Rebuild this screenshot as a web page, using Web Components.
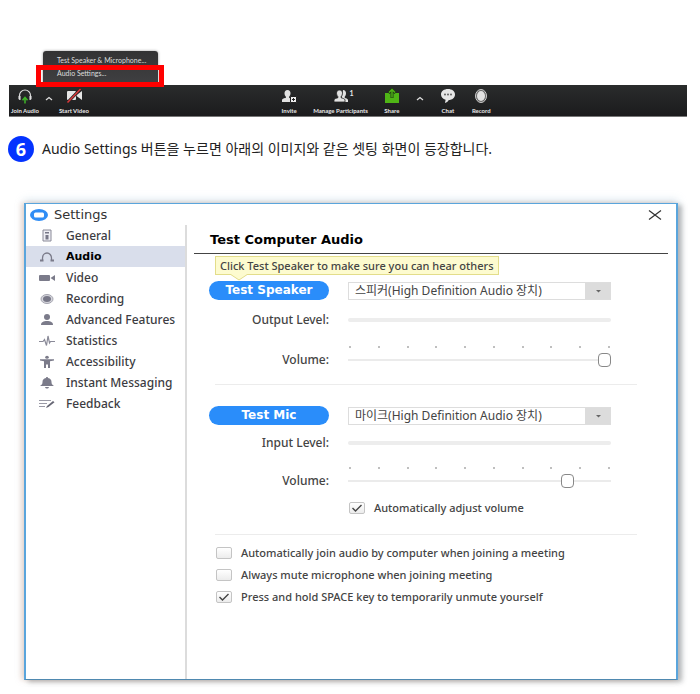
<!DOCTYPE html>
<html lang="ko">
<head>
<meta charset="utf-8">
<meta name="viewport" content="width=device-width, initial-scale=1">
<title>Audio Settings</title>
<style>
  body {
    margin: 0;
    background: #fff;
    color: #444;
    font-family: "Noto Sans", "Noto Sans CJK KR", sans-serif;
    font-size: 12px;
  }
</style>
</head>
<body>
<guide-page>
  <meeting-toolbar>
    <audio-menu slot="menu"></audio-menu>
    <tool-button icon="audio">Join Audio</tool-button>
    <tool-button icon="caret" label="Audio options"></tool-button>
    <tool-button icon="video">Start Video</tool-button>
    <tool-button slot="main" icon="invite">Invite</tool-button>
    <tool-button slot="main" icon="people" count="1">Manage Participants</tool-button>
    <tool-button slot="main" icon="share">Share</tool-button>
    <tool-button slot="main" icon="caret" label="Share options"></tool-button>
    <tool-button slot="main" icon="chat">Chat</tool-button>
    <tool-button slot="main" icon="record">Record</tool-button>
  </meeting-toolbar>
  <guide-step number="6">Audio Settings 버튼을 누르면 아래의 이미지와 같은 셋팅 화면이 등장합니다.</guide-step>
  <settings-window heading="Settings">
    <nav-item slot="nav" icon="general">General</nav-item>
    <nav-item slot="nav" icon="audio" current>Audio</nav-item>
    <nav-item slot="nav" icon="video">Video</nav-item>
    <nav-item slot="nav" icon="recording">Recording</nav-item>
    <nav-item slot="nav" icon="person">Advanced Features</nav-item>
    <nav-item slot="nav" icon="stats">Statistics</nav-item>
    <nav-item slot="nav" icon="access">Accessibility</nav-item>
    <nav-item slot="nav" icon="bell">Instant Messaging</nav-item>
    <nav-item slot="nav" icon="feedback">Feedback</nav-item>
    <audio-panel></audio-panel>
  </settings-window>
</guide-page>

<script>
/**
 * Audio settings guide
 * Small Shadow DOM components, each one carries its own markup and styles
 */

const TOOL_ICONS = {
  audio: `<svg width="16" height="16" viewBox="0 0 16 16" fill="none"><path d="M2.500 11V7.500a5.500 5.500 0 0 1 11 0V11" stroke="#ddd" stroke-width="1.200"/><path d="M1.500 8h2v4h-1l-1-1zM14.500 8h-2v4h1l1-1z" fill="#ddd"/><path d="M8 15.500V10M5.500 12.300L8 9.500l2.500 2.800" stroke="#3fb528" stroke-width="1.500"/></svg>`,
  video: `<svg width="18" height="16" viewBox="0 0 18 16"><rect x="2" y="3" width="9" height="9" rx="1" fill="#e6e6e6"/><path d="M11.500 7L17 3v9l-5.500-4z" fill="#e6e6e6"/><path d="M2.500 14.500L15.500 1" stroke="#222" stroke-width="3"/><path d="M2.500 14.500L15.500 1" stroke="#d8383a" stroke-width="1.600"/></svg>`,
  invite: `<svg width="16" height="16" viewBox="0 0 16 16"><path d="M6.500 2C8.500 2 9.500 3.300 9.500 5.200c0 1.600-.6 2.600-1.400 3.500v1c1 .6 2.900.8 2.900 2.300v2H1v-2c0-1.500 2.900-1.700 3.900-2.300v-1C4.100 7.800 3.500 6.800 3.500 5.200 3.500 3.300 4.500 2 6.500 2z" fill="#e2e2e2"/><path d="M9.500 8.500h6v6h-6z" fill="#eee" stroke="#222"/><path d="M12.500 10v3M11 11.500h3" stroke="#222"/></svg>`,
  people: `<svg width="16" height="16" viewBox="0 0 16 16"><path d="M10 2c2 0 3 1.300 3 3.200 0 1.600-.5 2.600-1.300 3.500v1c1 .6 3.300.8 3.300 2.300v2H8z" fill="#e2e2e2"/><path d="M6.500 2C8.500 2 9.500 3.300 9.500 5.200c0 1.600-.6 2.600-1.400 3.500v1c1 .6 3.900.8 3.900 2.300v2H1v-2c0-1.500 2.900-1.700 3.900-2.300v-1C4.100 7.800 3.500 6.800 3.500 5.200 3.500 3.300 4.500 2 6.500 2z" fill="#e2e2e2" stroke="#222" stroke-width=".8"/></svg>`,
  share: `<svg width="16" height="16" viewBox="0 0 16 16" fill="none"><path d="M1 5h14v10H1z" fill="#4fb516"/><path d="M8 10V2M4.500 5L8 1.500 11.500 5" stroke="#1f3a14" stroke-width="3"/><path d="M8 9.500V1.500M5 4.500L8 1.500l3 3" stroke="#4fb516" stroke-width="1.400"/></svg>`,
  chat: `<svg width="16" height="16" viewBox="0 0 16 16"><path d="M8 1c4 0 7 2.200 7 5.500S12 12 8.800 12C8 13.500 6.500 14.500 5 15l.6-3.300C2.900 11 1 9 1 6.500 1 3.200 4 1 8 1z" fill="#e6e6e6"/><g fill="#555"><circle cx="5" cy="6.500" r=".9"/><circle cx="8" cy="6.500" r=".9"/><circle cx="11" cy="6.500" r=".9"/></g></svg>`,
  record: `<svg width="16" height="16" viewBox="0 0 16 16"><ellipse cx="8" cy="8" rx="5.500" ry="6.500" fill="#666" stroke="#ccc"/><ellipse cx="8" cy="8" rx="4" ry="5" fill="#e2e2e2"/></svg>`,
  caret: `<svg width="8" height="16" viewBox="0 0 8 16"><path d="M1 12l3-2.500L7 12" fill="none" stroke="#ddd" stroke-width="1.300"/></svg>`
};

const NAV_ICONS = {
  general: `<path d="M4 1h8v11H4z" fill="#eeeef3" stroke="#8a8a98"/><path d="M6 3h4v1.500H6zM6.500 6h3v4.500h-3z" fill="#777787"/>`,
  audio: `<path d="M3.500 10V8A4.500 5 0 0 1 12.500 8v2" fill="none" stroke="#7b7b8a" stroke-width="1.300"/><path d="M1 10.500h3.500M11.500 10.500H15" stroke="#7b7b8a" stroke-width="2"/>`,
  video: `<rect x="0" y="4" width="11" height="6" rx="1" fill="#7b7b8a"/><path d="M11.500 7L16 4v6z" fill="#7b7b8a"/>`,
  recording: `<ellipse cx="8" cy="7" rx="6" ry="4.500" fill="#d5d5dc" stroke="#a5a5b0"/><ellipse cx="8" cy="7" rx="4" ry="3" fill="#777787"/>`,
  person: `<ellipse cx="8" cy="4" rx="3" ry="3" fill="#7b7b8a"/><path d="M2 12c0-3 2.500-4 6-4s6 1 6 4z" fill="#7b7b8a"/>`,
  stats: `<path d="M0 7.500h4l1.500-2 2 6L9 2l1.500 7 1-1.500H16" fill="none" stroke="#8a8a98" stroke-width="1.200"/>`,
  access: `<ellipse cx="8" cy="2.300" rx="1.800" ry="1.500" fill="#7b7b8a"/><path d="M1 4.200h14v1.300l-4 .8V13H9V9.500H7V13H5V6.300l-4-.8z" fill="#7b7b8a"/>`,
  bell: `<path d="M8 1c.8 0 1 .5 1 1 2.500.5 3.500 2 3.500 4 0 2 .5 2.500 2.500 4H1c2-1.500 2.500-2 2.500-4 0-2 1-3.500 3.500-4 0-.5.200-1 1-1zM6 11h4c-.3 1-1 1.500-2 1.500S6.300 12 6 11z" fill="#7b7b8a"/>`,
  feedback: `<path d="M0 3.500h12M0 6.500h8M0 9.500h6" stroke="#9a9aa6"/><path d="M7 11l1-2 6-5 1.500 1.300-6 4.700z" fill="#666674"/>`
};

class GuidePage extends HTMLElement {
  constructor() {
    super();
    this.attachShadow({ mode: 'open' });
    this.shadowRoot.innerHTML = `
      <style>
        :host { display: block; padding-top: 51px; }
      </style>
      <slot></slot>
    `;
  }
}

class MeetingToolbar extends HTMLElement {
  constructor() {
    super();
    this.attachShadow({ mode: 'open' });
    this.shadowRoot.innerHTML = `
      <style>
        :host { display: block; margin: 0 13px 0 9px; }
        .bar {
          display: grid;
          grid-template-columns: 2fr 3fr;
          height: 31px;
          background: linear-gradient(#2a2c2c, #1b1b1d);
          border-bottom: 1px solid #777;
        }
        .group { display: flex; align-items: flex-start; gap: 4px; padding: 3px 0 0 1px; }
        .main { gap: 14px; padding-left: 0; }
      </style>
      <slot name="menu"></slot>
      <div class="bar" role="toolbar" aria-label="Meeting controls">
        <div class="group"><slot></slot></div>
        <div class="group main"><slot name="main"></slot></div>
      </div>
    `;
  }
}

class ToolButton extends HTMLElement {
  connectedCallback() {
    const icon = this.getAttribute('icon');
    const label = this.getAttribute('label');
    const count = this.getAttribute('count');
    this.attachShadow({ mode: 'open' });
    this.shadowRoot.innerHTML = `
      <style>
        :host { display: block; }
        button {
          position: relative;
          display: flex;
          flex-direction: column;
          align-items: center;
          padding: 0 1px;
          border: 0;
          background: none;
          color: #e8e8e8;
          font: bold 6px/14px Lato, sans-serif;
          white-space: nowrap;
          cursor: pointer;
        }
        svg { display: block; }
        .count { position: absolute; left: 50%; top: 0; margin-left: 9px; font-size: 7px; line-height: 10px; }
      </style>
      <button type="button" ${label ? `aria-label="${label}"` : ''}>
        ${TOOL_ICONS[icon]}
        ${count ? `<span class="count">${count}</span>` : ''}
        <slot></slot>
      </button>
    `;
  }
}

class AudioMenu extends HTMLElement {
  constructor() {
    super();
    this.attachShadow({ mode: 'open' });
    this.shadowRoot.innerHTML = `
      <style>
        :host { display: block; position: relative; width: 115px; margin-left: 34px; }
        .menu {
          box-sizing: border-box;
          height: 34px;
          padding: 3px 0;
          border-radius: 3px 3px 0 0;
          background: linear-gradient(#333334, #404042);
          box-shadow: 0 0 3px rgba(0, 0, 0, .4);
        }
        button {
          display: block;
          width: 100%;
          padding: 0 0 0 14px;
          border: 0;
          background: none;
          color: #ddd;
          font: 7px/13px Lato, sans-serif;
          text-align: left;
          cursor: pointer;
        }
        /* Red frame around the entry the step talks about */
        .frame {
          position: absolute;
          inset: 14px -6px -2px -7px;
          border: 5px solid #f00;
          pointer-events: none;
        }
      </style>
      <div class="menu">
        <button type="button">Test Speaker &amp; Microphone...</button>
        <button type="button">Audio Settings...</button>
      </div>
      <div class="frame"></div>
    `;
  }
}

class GuideStep extends HTMLElement {
  connectedCallback() {
    this.attachShadow({ mode: 'open' });
    this.shadowRoot.innerHTML = `
      <style>
        :host { display: flex; align-items: center; gap: 8px; margin: 19px 8px 41px; color: #222; font-size: 14px; line-height: 26px; }
        .number {
          flex: none;
          width: 26px;
          border-radius: 50%;
          background: #0433ff;
          color: #fff;
          font-size: 18px;
          font-weight: bold;
          text-align: center;
        }
        p { margin: 0; }
      </style>
      <span class="number">${this.getAttribute('number')}</span>
      <p><slot></slot></p>
    `;
  }
}

class SettingsWindow extends HTMLElement {
  connectedCallback() {
    this.attachShadow({ mode: 'open' });
    this.shadowRoot.innerHTML = `
      <style>
        :host {
          display: block;
          margin: 0 22px 14px 24px;
          border: solid #5aa5dc;
          border-width: 1px 2px;
          border-bottom-color: #4f89b0;
          background: #fff;
          box-shadow: 4px 2px 5px rgba(60, 60, 60, .35), -3px 0 5px rgba(225, 190, 170, .5), 0 -3px 8px rgba(170, 200, 225, .4);
        }
        header { display: flex; align-items: center; gap: 6px; height: 21px; padding: 0 14px 0 4px; }
        h1 { flex: 1; margin: 0; color: #333; font: 13px/21px "DejaVu Sans", sans-serif; }
        svg { display: block; }
        .close { padding: 0; border: 0; background: none; cursor: pointer; }
        .body { display: grid; grid-template-columns: 161px minmax(0, 1fr); min-height: 454px; }
        nav { border-right: 2px solid #dcdcdc; }
      </style>
      <header>
        <svg width="18" height="12" viewBox="0 0 18 12"><ellipse cx="9" cy="6" rx="9" ry="6" fill="#2f8df5"/><rect x="4" y="3.500" width="10" height="5" rx="1.500" fill="#fff"/></svg>
        <h1>${this.getAttribute('heading')}</h1>
        <button class="close" type="button" aria-label="Close"><svg width="14" height="10" viewBox="0 0 14 10"><path d="M1 .5l12 9M13 .5l-12 9" stroke="#333" stroke-width="1.200"/></svg></button>
      </header>
      <div class="body">
        <nav><slot name="nav"></slot></nav>
        <slot></slot>
      </div>
    `;
  }
}

class NavItem extends HTMLElement {
  connectedCallback() {
    const current = this.hasAttribute('current');
    this.attachShadow({ mode: 'open' });
    this.shadowRoot.innerHTML = `
      <style>
        :host { display: block; }
        a {
          display: flex;
          align-items: center;
          gap: 11px;
          padding-left: 13px;
          color: #3c3c42;
          font-weight: 500;
          line-height: 21px;
          text-decoration: none;
          white-space: nowrap;
        }
        a[aria-current] { background: #d9deeb; color: #000; font: bold 11px/21px "DejaVu Sans", sans-serif; }
        svg { flex: none; }
      </style>
      <a href="#${this.getAttribute('icon')}" ${current ? 'aria-current="page"' : ''}>
        <svg width="16" height="14" viewBox="0 0 16 14">${NAV_ICONS[this.getAttribute('icon')]}</svg>
        <span><slot></slot></span>
      </a>
    `;
  }
}

class AudioPanel extends HTMLElement {
  constructor() {
    super();
    this.attachShadow({ mode: 'open' });
    this.shadowRoot.innerHTML = `
      <style>
        :host { display: block; padding: 3px 8px 0 7px; }
        h2 { margin: 0; padding: 0 16px 1px; border-bottom: 1px solid #444; color: #000; font: bold 13px/24px "DejaVu Sans", sans-serif; }
        .devices { margin: 27px 57px 0 15px; }
        hr { height: 1px; margin: 0 -26px 0 6px; border: 0; background: #ececec; }
        .options { display: grid; gap: 6px; padding: 10px 0 0 7px; }
      </style>
      <h2>Test Computer Audio</h2>
      <div class="devices">
        <audio-device action="Test Speaker" device="스피커(High Definition Audio 장치)" level="Output Level:" volume="100"
          hint="Click Test Speaker to make sure you can hear others"></audio-device>
        <hr>
        <audio-device compact action="Test Mic" device="마이크(High Definition Audio 장치)" level="Input Level:" volume="85">
          <check-option checked>Automatically adjust volume</check-option>
        </audio-device>
        <hr>
        <div class="options">
          <check-option>Automatically join audio by computer when joining a meeting</check-option>
          <check-option>Always mute microphone when joining meeting</check-option>
          <check-option checked>Press and hold SPACE key to temporarily unmute yourself</check-option>
        </div>
      </div>
    `;
  }
}

class AudioDevice extends HTMLElement {
  connectedCallback() {
    const hint = this.getAttribute('hint');
    const level = this.getAttribute('level');
    this.attachShadow({ mode: 'open' });
    this.shadowRoot.innerHTML = `
      <style>
        :host { display: block; padding-bottom: 16px; }
        :host([compact]) { padding: 21px 0 18px; }
        .grid {
          position: relative;
          display: grid;
          grid-template-columns: 120px minmax(0, 1fr);
          column-gap: 19px;
          align-items: center;
        }
        .test {
          height: 19px;
          padding: 0;
          border: 0;
          border-radius: 10px;
          background: #2a8dfa;
          color: #fff;
          font: bold 12px/19px "DejaVu Sans", sans-serif;
          cursor: pointer;
        }
        .hint {
          position: absolute;
          left: 6px;
          bottom: 100%;
          margin-bottom: 6px;
          padding: 0 4px;
          border: 1px solid #e3dd8a;
          background: #fdfbcf;
          color: #444;
          font-size: 11px;
          font-weight: 500;
          line-height: 17px;
          white-space: nowrap;
        }
        .hint svg { position: absolute; left: 14px; top: 100%; }
        .device { position: relative; }
        select {
          display: block;
          box-sizing: border-box;
          width: 100%;
          height: 18px;
          padding: 0 30px 0 6px;
          border: 1px solid #ddd;
          border-radius: 0;
          appearance: none;
          background: linear-gradient(#dcdcdc, #dcdcdc) right / 25px 100% no-repeat #fff;
          color: #444;
          font: inherit;
          line-height: 16px;
        }
        .device svg { position: absolute; right: 10px; top: 7px; pointer-events: none; }
        label, .label { color: #444; font-weight: 500; line-height: 16px; text-align: right; }
        .level { margin-top: 12px; }
        :host([compact]) .level { margin-top: 10px; }
        .meter { height: 4px; border-radius: 2px; background: #ededed; }
        .ticks { display: flex; grid-column: 2; justify-content: space-between; height: 3px; margin: 18px 1px 3px; }
        :host([compact]) .ticks { margin-top: 16px; }
        .ticks i { width: 2px; height: 2px; border-radius: 50%; background: #aaa; }
        input { width: 100%; height: 14px; margin: 0; appearance: none; background: none; }
        input::-webkit-slider-runnable-track { height: 2px; background: #ebebeb; }
        input::-webkit-slider-thumb {
          appearance: none;
          box-sizing: border-box;
          width: 13px;
          height: 14px;
          margin-top: -6px;
          border: 1px solid #888;
          border-radius: 4px;
          background: #fff;
        }
        .extra { grid-column: 2; padding: 0 0 0 1px; }
        :host([compact]) .extra { padding-top: 11px; }
      </style>
      <div class="grid">
        ${hint ? `<div class="hint">${hint}<svg width="18" height="7" viewBox="0 0 18 7"><path d="M0-1h18v1L9 6 0 0z" fill="#fdfbcf"/><path d="M0 0l9 6 9-6" fill="none" stroke="#e3dd8a"/></svg></div>` : ''}
        <button class="test" type="button">${this.getAttribute('action')}</button>
        <div class="device">
          <select aria-label="Device"><option>${this.getAttribute('device')}</option></select>
          <svg width="5" height="4" viewBox="0 0 5 4"><path d="M0 1h5L2.500 3.500z" fill="#666"/></svg>
        </div>
        <span class="label level">${level}</span>
        <div class="meter level" role="meter" aria-label="${level}" aria-valuenow="0"></div>
        <div class="ticks">${'<i></i>'.repeat(10)}</div>
        <label for="volume">Volume:</label>
        <input id="volume" type="range" min="0" max="100" value="${this.getAttribute('volume')}">
        <div class="extra"><slot></slot></div>
      </div>
    `;
  }
}

class CheckOption extends HTMLElement {
  connectedCallback() {
    this.attachShadow({ mode: 'open' });
    this.shadowRoot.innerHTML = `
      <style>
        :host { display: block; }
        label { display: flex; align-items: center; gap: 9px; color: #444; font-size: 11px; font-weight: 500; line-height: 16px; white-space: nowrap; }
        .box { position: relative; display: flex; }
        input {
          box-sizing: border-box;
          width: 16px;
          height: 12px;
          margin: 0;
          appearance: none;
          border: 1px solid #c4c4c4;
          border-radius: 2px;
          background: linear-gradient(#fff, #ececec);
        }
        svg { position: absolute; left: 2px; top: 1px; visibility: hidden; pointer-events: none; }
        input:checked + svg { visibility: visible; }
      </style>
      <label>
        <span class="box">
          <input type="checkbox" ${this.hasAttribute('checked') ? 'checked' : ''}>
          <svg width="12" height="10" viewBox="0 0 12 10"><path d="M1.500 5l3 3L10.500 2" fill="none" stroke="#444" stroke-width="1.400"/></svg>
        </span>
        <span><slot></slot></span>
      </label>
    `;
  }
}

// Register the custom elements
customElements.define('guide-page', GuidePage);
customElements.define('meeting-toolbar', MeetingToolbar);
customElements.define('tool-button', ToolButton);
customElements.define('audio-menu', AudioMenu);
customElements.define('guide-step', GuideStep);
customElements.define('settings-window', SettingsWindow);
customElements.define('nav-item', NavItem);
customElements.define('audio-panel', AudioPanel);
customElements.define('audio-device', AudioDevice);
customElements.define('check-option', CheckOption);
</script>
</body>
</html>
